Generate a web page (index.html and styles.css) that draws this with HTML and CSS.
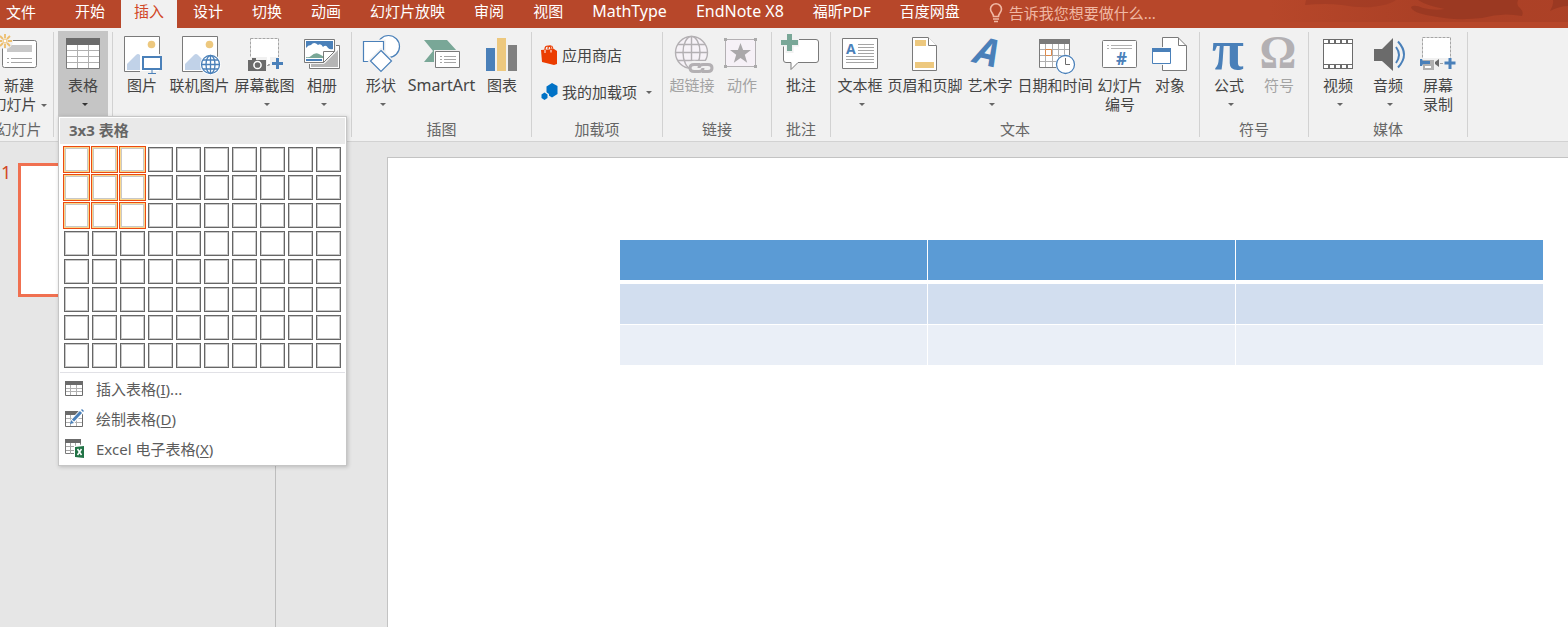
FILE: index.html
```html
<!DOCTYPE html>
<html lang="zh-CN">
<head>
<meta charset="utf-8">
<meta name="viewport" content="width=device-width, initial-scale=1">
<title>插入表格</title>
<link rel="stylesheet" href="styles.css">
</head>
<body>
<header class="tabbar">
  <nav class="tabs">
    <button class="tab tab-file">文件</button>
    <button class="tab">开始</button>
    <button class="tab tab-active">插入</button>
    <button class="tab">设计</button>
    <button class="tab">切换</button>
    <button class="tab">动画</button>
    <button class="tab">幻灯片放映</button>
    <button class="tab">审阅</button>
    <button class="tab">视图</button>
    <button class="tab latin">MathType</button>
    <button class="tab latin">EndNote X8</button>
    <button class="tab">福昕PDF</button>
    <button class="tab">百度网盘</button>
  </nav>
  <label class="tell-me">
    <svg width="14" height="20" viewBox="0 0 14 20" fill="none" stroke="#f0b8a4" stroke-width="1.6"><path d="M4.5 13.5C4.5 10.500 1.500 9.500 1.500 6a5.500 5.200 0 0 1 11 0c0 3.500-3 4.500-3 7.500z"/><path d="M4 16h6M5 18.500h4"/></svg>
    <input type="text" placeholder="告诉我您想要做什么..." aria-label="告诉我您想要做什么">
  </label>
  <svg class="tabbar-art" width="300" height="22" viewBox="0 0 300 22">
    <defs><linearGradient id="fade"><stop offset="0" stop-color="#a03a22" stop-opacity="0"/><stop offset=".5" stop-color="#a03a22" stop-opacity=".5"/><stop offset="1" stop-color="#a03a22" stop-opacity=".45"/></linearGradient></defs>
    <path d="M0 0h300v22H0z" fill="url(#fade)"/>
    <path d="M38 0h90q-6 5-24 7-14 1-30-2-16-2-37 0z" fill="#9f3b24" opacity=".7"/>
    <path d="M150 0h100q-2 6 2 8 4 4 2 8-20-4-40 2-28 3-50-2-20-3-21-9 3-3 12 1 12 3 22 1-18-3-27-9zM285 0h15v6q-8 0-18 5 4-6 3-11z" fill="#9b3922"/>
  </svg>
</header>

<section class="ribbon" aria-label="插入">
  <div class="group group-clipped">
    <div class="tools">
      <button class="tool">
        <svg class="icon" width="40" height="40" viewBox="0 0 40 40"><rect x="3.500" y="6.500" width="34" height="27" rx="2" fill="#fff" stroke="#7a7a7a"/><path d="M8 11h25v7H8z" fill="#c8c8c8"/><path d="M8 24.500h2M12 24.500h21M8 28.500h2M12 28.500h21" stroke="#a5a5a5"/><circle cx="6" cy="7" r="8" fill="#f1f1f1"/><path d="M6 0v4M6 10v4M-1 7h4M9 7h4M1 2l3 3M8 9l3 3M1 12l3-3M8 5l3-3" stroke="#edbd6b" stroke-width="1.800"/><circle cx="6" cy="7" r="2" fill="#fff" stroke="#edbd6b"/></svg>
        <span>新建<br>幻灯片<i class="caret caret-inline"></i></span>
      </button>
    </div>
    <div class="group-name">幻灯片</div>
  </div>

  <div class="group group-table">
    <div class="tools">
      <button class="tool tool-open" aria-expanded="true">
        <svg class="icon" width="40" height="40" viewBox="0 0 40 40"><path d="M3.500 4.500h33v30h-33z" fill="#fff" stroke="#7a7a7a"/><path d="M14.500 11v23M25.500 11v23M4 16.500h32M4 22.500h32M4 28.500h32" stroke="#b0b0b0"/><path d="M3 4h34v7H3z" fill="#6b6b6b"/></svg>
        <span>表格</span><i class="caret"></i>
      </button>
    </div>
    <div class="menu">
      <div class="menu-title">3x3 表格</div>
      <div class="picker" id="picker" role="group" aria-label="3x3 表格"></div>
      <div class="menu-items">
        <button class="menu-item">
          <svg width="20" height="20" viewBox="0 0 20 20"><path d="M1.500 2.500h17v14h-17z" fill="#fff" stroke="#6b6b6b"/><path d="M6.500 6v10M12.500 6v10M2 9.500h16M2 12.500h16" stroke="#b0b0b0"/><path d="M1 2h18v4H1z" fill="#6b6b6b"/></svg>
          <span>插入表格(<u>I</u>)...</span>
        </button>
        <button class="menu-item">
          <svg width="20" height="20" viewBox="0 0 20 20"><path d="M1.500 2.500h17v15h-17z" fill="#fff" stroke="#6b6b6b"/><path d="M6.500 6v11M12.500 6v11M2 9.500h16M2 13.500h16" stroke="#b0b0b0"/><path d="M1 2h14v4H1z" fill="#6b6b6b"/><path d="M7 14l12-13" stroke="#fff" stroke-width="5"/><path d="M9 11.500L17 3" stroke="#4a80b9" stroke-width="3"/><path d="M6 15l1-4 3 3z" fill="#4a80b9"/><path d="M17 1l2 2 1-1-2-2z" fill="#4a80b9"/></svg>
          <span>绘制表格(<u>D</u>)</span>
        </button>
        <button class="menu-item">
          <svg width="20" height="20" viewBox="0 0 20 20"><path d="M1.500 1.500h15v13h-15z" fill="#fff" stroke="#7a7a7a"/><path d="M6.500 4v11M11.500 4v11M2 7.500h14M2 11.500h14" stroke="#a5a5a5"/><path d="M1 0h16v4H1z" fill="#6b6b6b"/><path d="M10 7l10-2v15l-10-2z" fill="#fff"/><path d="M11 8l9-1v12l-9-1z" fill="#217346"/><path d="M13.500 10l4 6M17.500 10l-4 6" stroke="#fff" stroke-width="1.500"/></svg>
          <span>Excel 电子表格(<u>X</u>)</span>
        </button>
      </div>
    </div>
  </div>

  <div class="group">
    <div class="tools">
      <button class="tool">
        <svg class="icon" width="40" height="40" viewBox="0 0 40 40"><path d="M2.500 2.500h35v35h-35z" fill="#fff" stroke="#7a7a7a"/><circle cx="29.500" cy="10.500" r="3.800" fill="#edc87e"/><path d="M18 20h24v20H18z" fill="#f1f1f1"/><path d="M18 19h19v18H18z" fill="#fff"/><path d="M5 36v-6l9-9q2-2 4 0v15z" fill="#c1d2e8"/><path d="M21 23h18v12H21z" fill="#fff" stroke="#4a80b9" stroke-width="2"/><path d="M30 36v3M26 39.500h8" stroke="#4a80b9"/></svg>
        <span>图片</span>
      </button>
      <button class="tool tool-w65">
        <svg class="icon" width="40" height="40" viewBox="0 0 40 40"><path d="M2.500 2.500h35v35h-35z" fill="#fff" stroke="#7a7a7a"/><circle cx="29.500" cy="10.500" r="3.800" fill="#edc87e"/><path d="M5 36v-6l9-9q2-2 4 0l7 7v8z" fill="#c1d2e8"/><circle cx="30.500" cy="30.500" r="10.500" fill="#fff"/><g fill="none" stroke="#4a80b9" stroke-width="1.300"><circle cx="30.500" cy="30.500" r="9"/><ellipse cx="30.500" cy="30.500" rx="4.500" ry="9"/><path d="M30.500 21.500v18M21.500 30.500h18M23 26h15M23 35h15"/></g></svg>
        <span>联机图片</span>
      </button>
      <button class="tool tool-w65">
        <svg class="icon" width="40" height="40" viewBox="0 0 40 40"><path d="M5.500 4.500h28v27h-28z" fill="#fff" stroke="#a5a5a5" stroke-dasharray="3 1"/><path d="M2 23h20v15H2zM25 23h15v13H25z" fill="#f1f1f1"/><path d="M6 22h16v1H6z" fill="#fff"/><path d="M3 26h4v-2h4v2h10v11H3z" fill="#6b6b6b"/><circle cx="12.500" cy="31" r="3.600" fill="none" stroke="#fff" stroke-width="1.500"/><path d="M23 30.500h2" stroke="#a5a5a5"/><path d="M32.500 24v11M27 29.500h11" stroke="#4a80b9" stroke-width="3"/></svg>
        <span>屏幕截图</span><i class="caret"></i>
      </button>
      <button class="tool">
        <svg class="icon" width="40" height="40" viewBox="0 0 40 40"><path d="M7.500 11.500h30v23h-30z" fill="#fff" stroke="#7a7a7a"/><path d="M9 29h27v4H9zM23 29l13-13v13z" fill="#b5b5b5"/><path d="M1 4h33v13L22 30H1z" fill="#f1f1f1"/><path d="M2.500 5.500h30v12l-11 11h-19z" fill="#fff" stroke="#7a7a7a"/><path d="M4 7h27v8q-3 1-5-1-2-4-5-1-2-4-5-2-4-4-7 0-3 0-5 3z" fill="#4a80b9"/><path d="M4 23q3 1 5-1 4-4 8-2 4 2 5 3l-1 1H4z" fill="#79a797"/><path d="M4 25h16v2H4z" fill="#4a80b9"/><path d="M21.500 28.500v-11h11z" fill="#fff" stroke="#7a7a7a"/></svg>
        <span>相册</span><i class="caret"></i>
      </button>
    </div>
  </div>

  <div class="group">
    <div class="tools">
      <button class="tool">
        <svg class="icon" width="40" height="40" viewBox="0 0 40 40" fill="#fff" stroke="#4a80b9" stroke-width="1.200"><circle cx="27.500" cy="12.500" r="11"/><path d="M1 6h23v23H1z" stroke="#f1f1f1" fill="#f1f1f1"/><path d="M2.500 7.500h20v20h-20z"/><path d="M20 15l12 12-12 12L8 27z" stroke="#f1f1f1" stroke-width="2"/><path d="M20 16.500L30.500 27 20 37.500 9.500 27z"/></svg>
        <span>形状</span><i class="caret"></i>
      </button>
      <button class="tool tool-w71">
        <svg class="icon" width="40" height="40" viewBox="0 0 40 40"><path d="M2 6h23l10 11v11H2l9-11z" fill="#79a797"/><path d="M12 16h27v20H12z" fill="#f1f1f1"/><path d="M13.500 17.500h24v16h-24z" fill="#fff" stroke="#7a7a7a"/><path d="M18 22.500h2M22 22.500h12M18 25.500h2M22 25.500h12M18 28.500h2M22 28.500h12" stroke="#a5a5a5"/></svg>
        <span class="latin">SmartArt</span>
      </button>
      <button class="tool">
        <svg class="icon" width="40" height="40" viewBox="0 0 40 40"><path d="M4 14h9v23H4z" fill="#4a80b9"/><path d="M15 4h9v33h-9z" fill="#edc87e"/><path d="M26 11h9v26h-9z" fill="#808080"/></svg>
        <span>图表</span>
      </button>
    </div>
    <div class="group-name">插图</div>
  </div>

  <div class="group">
    <div class="tools tools-list">
      <button class="tool-small">
        <svg width="20" height="22" viewBox="0 0 20 22"><path d="M1 6l13-1 3 2v13l-3 1-12-3z" fill="#eb3c00"/><path d="M5 9V5q0-3 3-3 3 0 3 3v3M8 5q0-4 3-3 2 0 2 5" fill="none" stroke="#eb3c00" stroke-width="1.200"/><path d="M5 9V6M11 8.500V6" stroke="#fff"/></svg>
        <span>应用商店</span>
      </button>
      <button class="tool-small">
        <svg width="20" height="22" viewBox="0 0 20 22"><path d="M12 2l5.500 3v8L12 16.500 6.500 13V5.500z" fill="#0072c6"/><path d="M4.500 10l4.500 3v4l-4 3-5-2v-5z" fill="#f1f1f1"/><path d="M4.500 11.500l3 2v3.500l-3 2-3-2v-3.500z" fill="#0072c6"/></svg>
        <span>我的加载项</span><i class="caret"></i>
      </button>
    </div>
    <div class="group-name">加载项</div>
  </div>

  <div class="group">
    <div class="tools">
      <button class="tool" disabled>
        <svg class="icon" width="40" height="40" viewBox="0 0 40 40"><g fill="#f6f2f7" stroke="#b3b0b3" stroke-width="1.400"><circle cx="19.500" cy="18.500" r="16"/><ellipse cx="19.500" cy="18.500" rx="8.500" ry="16"/><path d="M19.500 2.500v32M3.500 18.500h32M6 10.500h27M6 26.500h27"/></g><path d="M15 30q3-4 10-3h17v13H22z" fill="#f1f1f1"/><g fill="none" stroke="#b3b0b3" stroke-width="3"><path d="M28 30.500h-6q-4 0-4 3.500t4 3.500h5q4 0 4-3.500"/><path d="M27 34q0-3.500 4-3.500h5q4 0 4 3.500t-4 3.500h-6"/></g></svg>
        <span>超链接</span>
      </button>
      <button class="tool" disabled>
        <svg class="icon" width="40" height="40" viewBox="0 0 40 40"><path d="M3.500 5.500h30v27h-30z" fill="#f6f1f7" stroke="#b3b0b3"/><path d="M2 4h3v3H2zM32 4h3v3h-3zM2 31h3v3H2zM32 31h3v3h-3z" fill="#aaa"/><path d="M18.500 9l2.600 7H29l-6.200 4.700 2.400 8-6.700-4.800-6.700 4.800 2.400-8L8 16h7.900z" fill="#aaa8aa"/></svg>
        <span>动作</span>
      </button>
    </div>
    <div class="group-name">链接</div>
  </div>

  <div class="group">
    <div class="tools">
      <button class="tool">
        <svg class="icon" width="40" height="40" viewBox="0 0 40 40"><path d="M5 5.500h30q2.500 0 2.500 2.500v18q0 2.500-2.500 2.500H17l-7 7v-7H5Q2.500 28.500 2.500 26V8q0-2.500 2.500-2.500z" fill="#fff" stroke="#7a7a7a"/><path d="M8.500-1v20M-1 8.500h19" stroke="#f1f1f1" stroke-width="8"/><path d="M8.500 0v17M0 8.500h17" stroke="#79a797" stroke-width="5"/></svg>
        <span>批注</span>
      </button>
    </div>
    <div class="group-name">批注</div>
  </div>

  <div class="group">
    <div class="tools">
      <button class="tool">
        <svg class="icon" width="40" height="40" viewBox="0 0 40 40"><path d="M2.500 4.500h35v30h-35z" fill="#fff" stroke="#7a7a7a"/><text x="6" y="20" class="glyph-sans" font-size="14" fill="#4a80b9">A</text><path d="M18 10.500h16M18 13.500h16M18 16.500h16M18 19.500h16M6 22.500h28M6 25.500h28M6 28.500h28" stroke="#a5a5a5"/></svg>
        <span>文本框</span><i class="caret"></i>
      </button>
      <button class="tool tool-w80">
        <svg class="icon" width="40" height="40" viewBox="0 0 40 40"><path d="M7.500 3.500H23l8.500 8.500v24.500h-24z" fill="#fff" stroke="#7a7a7a"/><path d="M23.500 3.500v8h8" fill="#fff" stroke="#7a7a7a"/><path d="M10 6h11v6H10zM10 28h19v6H10z" fill="#edc87e"/></svg>
        <span>页眉和页脚</span>
      </button>
      <button class="tool">
        <svg class="icon" width="40" height="40" viewBox="0 0 40 40"><text x="5" y="32" class="glyph-sans" font-size="38" font-style="italic" fill="#4a80b9" transform="rotate(14 20 20)">A</text></svg>
        <span>艺术字</span><i class="caret"></i>
      </button>
      <button class="tool tool-w80">
        <svg class="icon" width="40" height="40" viewBox="0 0 40 40"><path d="M4.500 5.500h30v28h-30z" fill="#fff" stroke="#7a7a7a"/><path d="M10.500 10v23M17.500 10v23M23.500 10v23M29.500 10v23M5 15.500h29M5 21.500h29M5 27.500h29" stroke="#b0b0b0"/><path d="M4 5h31v5H4z" fill="#7a7a7a"/><path d="M10.500 15.500h6v6h-6z" fill="#fff" stroke="#dd8a4b"/><circle cx="30.500" cy="30.500" r="10" fill="#fff"/><circle cx="30.500" cy="30.500" r="9" fill="#fff" stroke="#4a80b9" stroke-width="1.300"/><path d="M30.500 24v6.500H35" fill="none" stroke="#6b6b6b"/></svg>
        <span>日期和时间</span>
      </button>
      <button class="tool">
        <svg class="icon" width="40" height="40" viewBox="0 0 40 40"><rect x="2.500" y="6.500" width="34" height="27" rx="1" fill="#fff" stroke="#7a7a7a"/><path d="M7 11.500h2M11 11.500h21M7 14.500h2M11 14.500h21" stroke="#b0b0b0"/><text x="16" y="31" class="glyph-sans" font-size="17" fill="#4a80b9">#</text></svg>
        <span>幻灯片<br>编号</span>
      </button>
      <button class="tool">
        <svg class="icon" width="40" height="40" viewBox="0 0 40 40"><path d="M12.500 3.500H28l8.500 8.500v24.500h-24z" fill="#fff" stroke="#7a7a7a"/><path d="M28.500 3.500v8h8" fill="none" stroke="#7a7a7a"/><path d="M1 13h21v18H1z" fill="#f1f1f1"/><path d="M13 13h9v18h-9z" fill="#fff"/><path d="M2.500 14.500h18v15h-18z" fill="#fff" stroke="#4a80b9"/><path d="M2 14h19v4H2z" fill="#4a80b9"/></svg>
        <span>对象</span>
      </button>
    </div>
    <div class="group-name">文本</div>
  </div>

  <div class="group">
    <div class="tools">
      <button class="tool">
        <svg class="icon" width="40" height="40" viewBox="0 0 40 40"><text x="19" y="35" text-anchor="middle" class="glyph-serif" font-size="58" fill="#4a80b9">π</text></svg>
        <span>公式</span><i class="caret"></i>
      </button>
      <button class="tool" disabled>
        <svg class="icon" width="40" height="40" viewBox="0 0 40 40"><text x="19" y="34" text-anchor="middle" class="glyph-serif" font-size="46" fill="#b3b0b3">Ω</text></svg>
        <span>符号</span>
      </button>
    </div>
    <div class="group-name">符号</div>
  </div>

  <div class="group">
    <div class="tools">
      <button class="tool">
        <svg class="icon" width="40" height="40" viewBox="0 0 40 40"><path d="M5 5h30v30H5z" fill="#6b6b6b"/><path d="M6 10h28v20H6z" fill="#fff"/><path d="M6 7.500h28M6 32.500h28" stroke="#fff" stroke-width="3" stroke-dasharray="4 2"/></svg>
        <span>视频</span><i class="caret"></i>
      </button>
      <button class="tool">
        <svg class="icon" width="40" height="40" viewBox="0 0 40 40"><path d="M6 15h8L25 4v33L14 27H6z" fill="#6b6b6b"/><path d="M28 13q6 8 0 16M30 7.500q12 13 0 26" fill="none" stroke="#4a80b9" stroke-width="2"/></svg>
        <span>音频</span><i class="caret"></i>
      </button>
      <button class="tool">
        <svg class="icon" width="40" height="40" viewBox="0 0 40 40"><path d="M4.500 3.500h28v26h-28z" fill="#fff" stroke="#a5a5a5" stroke-dasharray="3 1"/><path d="M2 24h38v13H2z" fill="#f1f1f1"/><path d="M5 22h27v2H5z" fill="#fff"/><path d="M5 26h11v10H5z" fill="#b0b0b0"/><path d="M7 32h6v2H7z" fill="#fff"/><path d="M2 25h2l1 2h7v3H5l-1 2H2z" fill="#4a80b9"/><path d="M17 28l4-3v8l-4-3z" fill="#6b6b6b"/><path d="M22 29.500h3" stroke="#a5a5a5"/><path d="M32 24v11M26.500 29h11" stroke="#4a80b9" stroke-width="3"/></svg>
        <span>屏幕<br>录制</span>
      </button>
    </div>
    <div class="group-name">媒体</div>
  </div>
</section>

<main class="workspace">
  <aside class="thumbs">
    <span class="thumb-number">1</span>
    <div class="thumb"></div>
  </aside>
  <div class="stage">
    <div class="slide">
      <table class="slide-table">
        <thead><tr><th></th><th></th><th></th></tr></thead>
        <tbody>
          <tr><td></td><td></td><td></td></tr>
          <tr><td></td><td></td><td></td></tr>
        </tbody>
      </table>
    </div>
  </div>
</main>
<script src="script.js"></script>
</body>
</html>
```

FILE: styles.css
```css
* { box-sizing: border-box; }

body {
  margin: 0;
  height: 100vh;
  display: flex;
  flex-direction: column;
  overflow: hidden;
  background: #e6e6e6;
  color: #444;
  font: 15px/19px "Noto Sans", "Noto Sans CJK SC", sans-serif;
}

button, input { font: inherit; color: inherit; }

button {
  margin: 0;
  padding: 0;
  border: 0;
  background: none;
  white-space: nowrap;
}

svg { display: block; flex: none; }

.latin { font-size: 16px; }

/* Tab bar */
.tabbar {
  position: relative;
  flex: none;
  display: flex;
  height: 28px;
  background: #b7472a;
  color: #fff;
}

.tabs { display: flex; gap: 3px; }

.tab {
  height: 28px;
  padding: 0 13px 6px;
}

.tab-file { padding: 0 23px 4px 6px; }

.tab-active { background: #f1f1f1; color: #d24726; }

.tell-me {
  display: flex;
  align-items: center;
  gap: 6px;
  margin-left: 16px;
  padding-bottom: 2px;
}

.tell-me input {
  width: 180px;
  padding: 0;
  border: 0;
  outline: 0;
  background: none;
}

.tell-me input::placeholder { color: #f0b8a4; opacity: 1; }

.tabbar-art { position: absolute; top: 0; right: 0; }

/* Ribbon */
.ribbon {
  flex: none;
  display: flex;
  height: 114px;
  background: #f1f1f1;
  border-bottom: 1px solid #d2d2d2;
}

.group {
  position: relative;
  flex: none;
  display: flex;
  flex-direction: column;
  justify-content: space-between;
  padding: 3px 5px 2px 4px;
}

.group::after {
  content: "";
  position: absolute;
  top: 4px;
  right: 0;
  bottom: 4px;
  width: 1px;
  background: #d2d2d2;
}

.group-clipped { margin-left: -15px; }
.group-clipped .tool { width: 60px; }

.tools { display: flex; }

.tool {
  display: flex;
  flex-direction: column;
  align-items: center;
  width: 50px;
  height: 85px;
  padding-top: 3px;
}

.tool .icon { margin-bottom: 2px; overflow: visible; }
.tool-w65 { width: 65px; }
.tool-w71 { width: 71px; }
.tool-w80 { width: 80px; }
.tool-open { background: #c5c5c5; }
.tool:disabled { color: #a3a3a3; }

.caret {
  width: 0;
  height: 0;
  border: 3px solid transparent;
  border-top-color: #666;
  border-bottom: 0;
}

.tool > .caret { margin: 8px 0 0 4px; }
.tool-open > .caret { border-top-color: #333; }

.caret-inline {
  display: inline-block;
  margin-left: 4px;
  vertical-align: middle;
}

.tools-list {
  flex-direction: column;
  gap: 15px;
  padding: 13px 0 0 4px;
}

.tool-small {
  display: flex;
  align-items: center;
  gap: 2px;
  width: 118px;
  height: 22px;
}

.tool-small .caret { margin-left: 7px; }

.group-name {
  text-align: center;
  color: #666;
}

.glyph-sans { font-family: "Open Sans", sans-serif; font-weight: bold; }
.glyph-serif { font-family: "Liberation Serif", serif; font-weight: bold; }

/* Table menu */
.menu {
  position: absolute;
  z-index: 2;
  top: 88px;
  left: 4px;
  width: 289px;
  padding: 1px;
  border: 1px solid #c6c6c6;
  background: #fff;
  box-shadow: 1px 1px 4px rgba(0, 0, 0, .2);
  color: #5c5c5c;
}

.menu-title {
  padding: 3px 9px 4px;
  background: #e9e9e9;
  color: #666;
  font-weight: bold;
}

.picker {
  display: grid;
  grid-template-columns: repeat(10, 25px);
  gap: 3px;
  padding: 3px 4px 4px;
  border-bottom: 1px solid #e1e1e6;
}

.cell {
  height: 25px;
  border: 1px solid #666;
  box-shadow: inset 0 0 0 1px #c8c8c8;
}

.cell-on {
  border-color: #fbd88c;
  outline: 1px solid #eb4a12;
}

.menu-items { padding-top: 1px; }

.menu-item {
  display: flex;
  align-items: center;
  gap: 12px;
  width: 100%;
  height: 30px;
  padding-left: 4px;
}

.menu-item u { text-underline-offset: 2px; }

/* Workspace */
.workspace { flex: 1; display: flex; min-height: 0; }

.thumbs {
  flex: none;
  display: flex;
  align-items: flex-start;
  gap: 7px;
  width: 276px;
  padding: 21px 20px 0 1px;
  border-right: 1px solid #bdbdbd;
}

.thumb-number {
  width: 10px;
  color: #d24726;
  font-size: 18px;
  line-height: 18px;
}

.thumb {
  flex: 1;
  height: 134px;
  border: 3px solid #f07050;
  background: #fff;
}

.stage { flex: 1; display: flex; padding: 15px 0 0 111px; }

.slide {
  flex: 1;
  padding: 82px 24px 0 232px;
  border: solid #c3c3c3;
  border-width: 1px 0 0 1px;
  background: #fff;
}

.slide-table {
  width: 100%;
  border-spacing: 0;
  table-layout: fixed;
}

.slide-table th,
.slide-table td {
  height: 41px;
  padding: 0;
  border: 0 solid #fff;
  border-width: 0 1px 1px 0;
}

.slide-table th {
  height: 44px;
  border-bottom-width: 4px;
  background: #5b9bd5;
}

.slide-table td { background: #d2deef; }
.slide-table tr:last-child td { background: #eaeff7; }
```

FILE: script.js
```js
const picker = document.getElementById("picker");
for (let row = 1; row <= 8; row++) {
  for (let col = 1; col <= 10; col++) {
    const cell = document.createElement("button");
    cell.className = row <= 3 && col <= 3 ? "cell cell-on" : "cell";
    cell.setAttribute("aria-label", `${col}x${row}`);
    picker.append(cell);
  }
}
```
